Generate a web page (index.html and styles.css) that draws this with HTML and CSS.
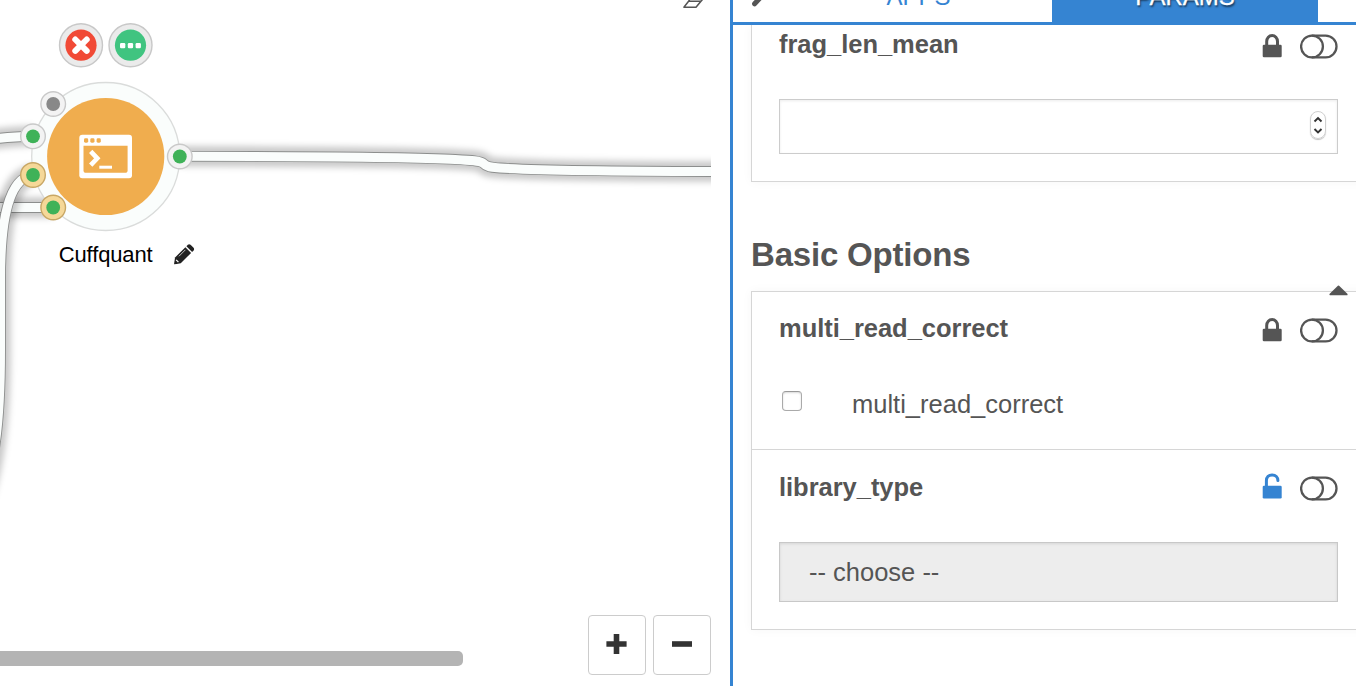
FILE: index.html
```html
<!DOCTYPE html>
<html lang="en">
<head>
<meta charset="utf-8">
<title>Workflow editor</title>
<link rel="stylesheet" href="styles.css">
</head>
<body>
<svg class="defs" width="0" height="0">
  <symbol id="lock" viewBox="0 0 20 24"><path d="M4.700 12V7.500a5.400 5.900 0 0 1 10.800 0V12" fill="none" stroke="currentColor" stroke-width="3"/><rect x=".7" y="10.800" width="19" height="12.400" rx="1.300" fill="currentColor"/></symbol>
  <symbol id="unlock" viewBox="0 0 20 26"><path d="M4.400 14V7.700C4.400 4 6.800 1.900 10.200 1.900c3.500 0 5.700 2.300 5.700 5.500" fill="none" stroke="currentColor" stroke-width="3" stroke-linecap="round"/><rect x=".7" y="12.800" width="19" height="12.700" rx="1.300" fill="currentColor"/></symbol>
  <symbol id="toggle" viewBox="0 0 38 25"><path d="M11.700 1.600H25.600a10.800 10.800 0 0 1 0 21.800H11.700" fill="none" stroke="currentColor" stroke-width="2.300"/><circle cx="12" cy="12.500" r="10.900" fill="none" stroke="currentColor" stroke-width="2.300"/></symbol>
  <symbol id="pencil" viewBox="0 0 20 20"><path d="M1.200 13.200 11.300 3.100l5.600 5.600L6.800 18.800.2 19.900z" fill="currentColor"/><path d="m12.300 2.100 1.400-1.400q1.300-1.100 2.600 0l3 3q1.100 1.300 0 2.600l-1.400 1.400z" fill="currentColor"/><path d="m5 12 6.300-6.300" stroke="#fff" stroke-width=".7"/><path d="m2.300 15.500 2.200 2.200" stroke="#fff" stroke-width="1.300"/></symbol>
</svg>
<div class="app">
  <main class="canvas">
    <svg class="graph" width="711" height="615" viewBox="0 0 711 615">
      <defs>
        <filter id="soft" filterUnits="userSpaceOnUse" x="-40" y="60" width="800" height="500"><feGaussianBlur stdDeviation="3"/></filter>
        <path id="w1" d="M-30 144C-15 139 5 137 33 136"/>
        <path id="w2" d="M-30 207.500H53"/>
        <path id="w3" d="M33 175C8 178 .5 222 .5 280V350C.5 390-2 425-5 445-8 465-12 485-18 500"/>
        <path id="w4" d="M180 156.300C300 156.300 400 157 450 159.200 471 160.300 480 160.500 483.500 163.500 487 167.500 493 167.400 500 168 550 171.200 640 171.300 720 171.500"/>
      </defs>
      <g fill="none">
        <g class="wire"><use href="#w1" class="shade"/><use href="#w1" class="edge"/><use href="#w1" class="core"/></g>
        <g class="wire"><use href="#w2" class="shade"/><use href="#w2" class="edge"/><use href="#w2" class="core"/></g>
        <g class="wire"><use href="#w3" class="shade"/><use href="#w3" class="edge"/><use href="#w3" class="core"/></g>
        <g class="wire"><use href="#w4" class="shade"/><use href="#w4" class="edge"/><use href="#w4" class="core"/></g>
      </g>
      <circle cx="105.700" cy="156.500" r="74" fill="#fafdfc" stroke="#dadcdb" stroke-width="1.300"/>
      <circle cx="105.700" cy="156.500" r="58.600" fill="#f0ad4e"/>
      <rect x="79.300" y="134.800" width="52.700" height="43.400" rx="3" fill="#fff"/>
      <path d="M83.500 145.800H127.600V170.200q0 2.600-2.600 2.600H86.100q-2.600 0-2.600-2.600z" fill="#f0ad4e"/>
      <g fill="#f0ad4e"><rect x="84" y="138.300" width="4.200" height="4.400" rx="1.400"/><rect x="90.300" y="138.300" width="4.200" height="4.400" rx="1.400"/><rect x="96.600" y="138.300" width="4.200" height="4.400" rx="1.400"/></g>
      <path d="M90.700 151.400 97.300 158.300 90.700 165.200" fill="none" stroke="#fff" stroke-width="4.600"/>
      <path d="M99.300 167.200H112" stroke="#fff" stroke-width="3"/>
      <g class="port"><circle cx="53.200" cy="104" r="12.300"/><circle cx="33" cy="136.300" r="12.300"/><circle cx="179.800" cy="156.500" r="12.300"/></g>
      <g class="port used"><circle cx="33" cy="175" r="12.300"/><circle cx="53.200" cy="207.500" r="12.300"/></g>
      <circle cx="53.200" cy="104" r="6.900" fill="#888"/>
      <g fill="#3fb258"><circle cx="33" cy="136.300" r="6.900"/><circle cx="179.800" cy="156.500" r="6.900"/><circle cx="33" cy="175" r="6.900"/><circle cx="53.200" cy="207.500" r="6.900"/></g>
      <g class="action"><circle cx="81" cy="45.200" r="21.500"/><circle cx="130.500" cy="45.200" r="21.500"/></g>
      <circle cx="81" cy="45.200" r="15.600" fill="#f14a36"/>
      <path d="m75.300 39.500 11.400 11.400M86.700 39.500 75.300 50.900" stroke="#fff" stroke-width="6" stroke-linecap="round"/>
      <circle cx="130.500" cy="45.200" r="15.600" fill="#40c480"/>
      <g fill="#fff"><rect x="120" y="43" width="5.300" height="5.300" rx="1.200"/><rect x="127.800" y="43" width="5.300" height="5.300" rx="1.200"/><rect x="135.600" y="43" width="5.300" height="5.300" rx="1.200"/></g>
      <text class="node-name" x="58.800" y="262">Cuffquant</text>
      <use href="#pencil" x="173.800" y="244" width="20.500" height="20.500" color="#222"/>
      <path d="M683.900 7.300 688.600 1.200H700.900L696 7.300zM688.600 1.200 692-4M700.900 1.200 705-4M696 7.300 703.300-1.500" fill="none" stroke="#555" stroke-width="1.500" stroke-linejoin="round"/>
    </svg>
    <div class="zoom">
      <button class="zoom-btn" aria-label="Zoom in"><svg width="22" height="22"><path d="M10.500 3.700V18.300M3.200 11H17.800" stroke="#333" stroke-width="5.600" stroke-linecap="square"/></svg></button>
      <button class="zoom-btn" aria-label="Zoom out"><svg width="22" height="22"><path d="M3.800 11H18.200" stroke="#333" stroke-width="5.600" stroke-linecap="square"/></svg></button>
    </div>
    <div class="scroll-thumb"></div>
  </main>
  <aside class="panel">
    <nav class="tabs">
      <div class="tab tool"><svg width="16" height="8" viewBox="0 0 16 8"><path d="M4.600 3.800 10-2" stroke="#555" stroke-width="5" stroke-linecap="round"/></svg></div>
      <div class="tab apps"><span>APPS</span></div>
      <div class="tab params"><span>PARAMS</span></div>
    </nav>
    <section class="card first">
      <div class="field">
        <header class="row"><h3>frag_len_mean</h3><svg class="lock"><use href="#lock"/></svg><svg class="toggle"><use href="#toggle"/></svg></header>
        <div class="number"><span class="stepper"><svg width="14" height="27" viewBox="0 0 14 27"><path d="m3.500 9.500 3.500-3.500 3.500 3.500M3.500 17 7 20.500 10.500 17" fill="none" stroke="#333" stroke-width="1.900"/></svg></span></div>
      </div>
    </section>
    <div class="group-head"><h2>Basic Options</h2><svg class="caret" width="19" height="11" viewBox="0 0 19 11"><path d="M1.300 9.400H17.700L9.500 1.500z" fill="#555" stroke="#555" stroke-width="1.800" stroke-linejoin="round"/></svg></div>
    <section class="card">
      <div class="field multi">
        <header class="row"><h3>multi_read_correct</h3><svg class="lock"><use href="#lock"/></svg><svg class="toggle"><use href="#toggle"/></svg></header>
        <label class="check"><span class="box"></span><span>multi_read_correct</span></label>
      </div>
      <div class="field library">
        <header class="row"><h3>library_type</h3><svg class="lock open"><use href="#unlock"/></svg><svg class="toggle"><use href="#toggle"/></svg></header>
        <div class="select">-- choose --</div>
      </div>
    </section>
  </aside>
</div>
</body>
</html>
```

FILE: styles.css
```css
* { box-sizing: border-box; }
body { margin: 0; background: #fff; color: #555; font-family: "Liberation Sans", Arial, sans-serif; }
h2, h3 { margin: 0; }
.defs { display: block; position: absolute; }
.app { display: flex; width: 1356px; height: 686px; overflow: hidden; }

.canvas { position: relative; width: 730px; flex: none; overflow: hidden; }
.graph { display: block; }
.shade { stroke: rgba(0, 0, 0, .21); stroke-width: 20.500; filter: url(#soft); }
.edge { stroke: #8c8e8d; stroke-width: 10.800; }
.core { stroke: #fafdfc; stroke-width: 9; }
.port { fill: #f3f3f3; stroke: #c9c9c9; stroke-width: 1.400; }
.port.used { fill: #f5d898; stroke: #c8a765; }
.action { fill: #ebebeb; stroke: #c8c8c8; stroke-width: 1.400; }
.node-name { font-size: 22px; letter-spacing: -.15px; fill: #000; }
.zoom { display: flex; gap: 7px; margin-left: 588px; }
.zoom-btn { display: flex; align-items: center; justify-content: center; width: 58px; height: 60px; padding: 0 1px 2px 0; border: 1px solid #ccc; border-radius: 4px; background: #fff; }
.scroll-thumb { position: absolute; left: -10px; bottom: 20px; width: 473px; height: 15px; border-radius: 5px; background: #b4b4b4; }

.panel { flex: 1; min-width: 0; border-left: 3px solid #3584d2; overflow: hidden; display: flex; flex-direction: column; }
.tabs { position: relative; z-index: 1; display: flex; flex: none; height: 25px; border-bottom: 3px solid #3584d2; background: #fff; overflow: hidden; }
.tab { display: flex; align-items: flex-end; justify-content: center; height: 22px; font-size: 24px; line-height: 24px; padding-bottom: 13px; }
.tool { width: 52px; justify-content: flex-start; padding: 0 0 14px 17px; }
.apps { width: 267px; color: #3584d2; }
.params { width: 266px; background: #3584d2; color: #fff; text-shadow: 1px 2px 2px rgba(0, 0, 0, .6); -webkit-text-stroke: .3px #fff; }

.card { flex: none; margin-left: 18px; width: 640px; border: 1px solid #d6d6d6; box-shadow: 0 0 10px rgba(0, 0, 0, .04); }
.first { height: 157px; border-top: 0; }
.field { width: 586px; margin-left: 27px; }
.row { display: flex; align-items: center; width: 559px; height: 30px; }
.row h3 { flex: 1; font-size: 25.500px; letter-spacing: -.03px; line-height: 30px; }
.lock { width: 20px; height: 24px; margin-right: 18px; }
.lock.open { height: 26px; color: #3584d2; margin-top: -3px; }
.toggle { width: 38px; height: 25px; }
.first .row { margin-top: 4px; }
.row .lock, .row .toggle { position: relative; top: 2px; }
.library .row .toggle { top: 1px; }
.library .row .lock { top: .5px; }
.number { display: flex; align-items: center; justify-content: flex-end; width: 559px; height: 55px; margin-top: 40px; padding: 0 11px 3px 0; border: 1px solid #ccc; box-shadow: inset 0 1px 3px rgba(0, 0, 0, .08); }
.stepper { display: flex; width: 16px; height: 28px; border: 1px solid #d0d0d0; border-radius: 8px; box-shadow: 0 1px 1px rgba(0, 0, 0, .25); }
.group-head { display: flex; flex: none; align-items: flex-end; justify-content: space-between; height: 109px; margin: 0 8px 0 18px; }
.group-head h2 { font-size: 33px; letter-spacing: -.2px; line-height: 38px; padding-bottom: 17px; }
.caret { position: relative; top: 5px; z-index: 1; }
.multi { height: 157px; padding-top: 21px; }
.library { width: auto; height: 180px; margin-left: 0; padding: 22px 0 0 27px; border-top: 1px solid #d6d6d6; }
.check { display: flex; align-items: center; margin-top: 46px; font-size: 25.500px; line-height: 30px; }
.box { width: 20px; height: 20px; margin: -7px 50px 0 3px; border: 1px solid #aaa; border-top-color: #999; border-radius: 4px; box-shadow: inset 0 1px 2px rgba(0, 0, 0, .15); }
.select { width: 559px; height: 60px; margin-top: 40px; padding-left: 29px; border: 1px solid #c8c8c8; background: #ededed; box-shadow: inset 0 1px 3px rgba(0, 0, 0, .1); font-size: 25.500px; line-height: 59px; }
```
